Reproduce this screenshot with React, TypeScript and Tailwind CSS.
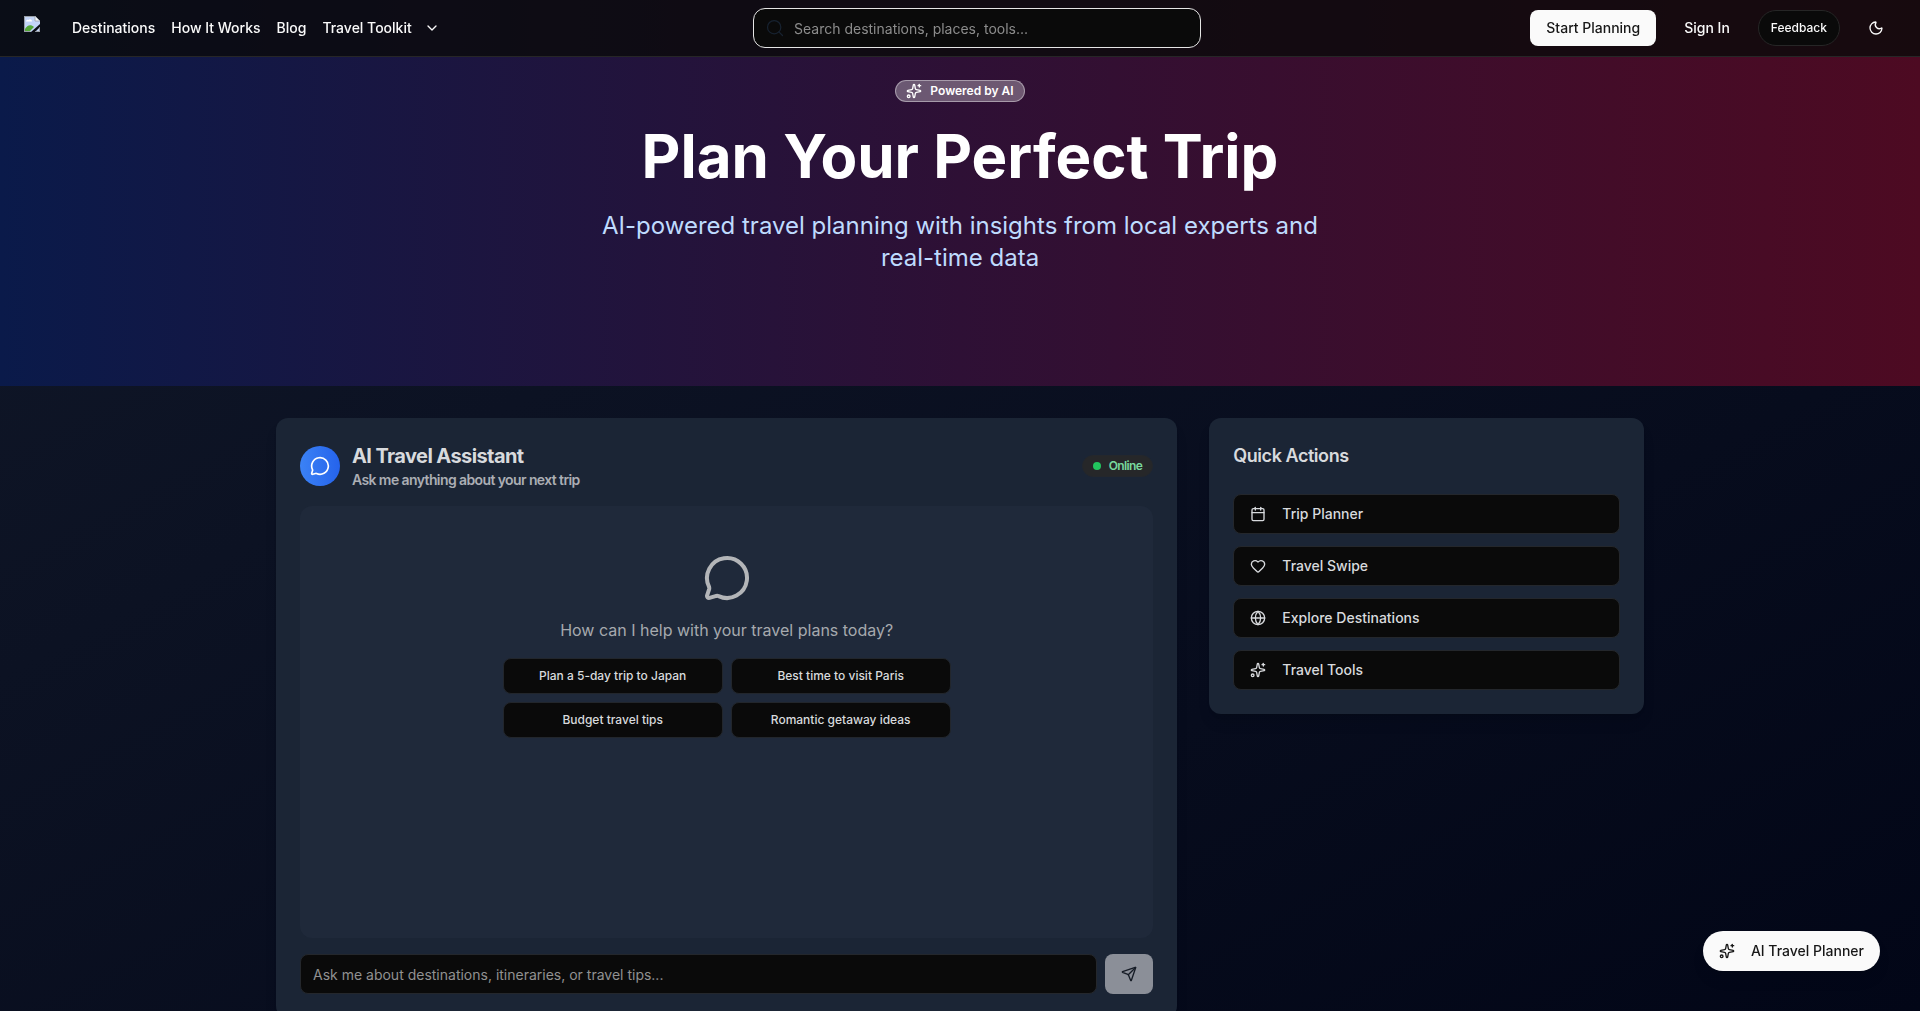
import React from 'react';
import { Calendar, ChevronDown, Globe, Heart, MessageCircle, Moon, Search, Send, Sparkles } from 'lucide-react';

const navLinks = [
  { label: 'Destinations', href: '#destinations' },
  { label: 'How It Works', href: '#how-it-works' },
  { label: 'Blog', href: '#blog' },
];

const suggestions = [
  'Plan a 5-day trip to Japan',
  'Best time to visit Paris',
  'Budget travel tips',
  'Romantic getaway ideas',
];

const quickActions = [
  { label: 'Trip Planner', icon: Calendar },
  { label: 'Travel Swipe', icon: Heart },
  { label: 'Explore Destinations', icon: Globe },
  { label: 'Travel Tools', icon: Sparkles },
];

function Logo() {
  return (
    <svg width="16" height="16" viewBox="0 0 16 16" role="img" aria-label="Home">
      <path d="M0 0h11l5 5v11H0z" fill="#c5d5f5" />
      <path d="M1 1.500h9.500v4H15V15H1z" fill="#c3d4f7" />
      <path d="M2 5.500c0-1.500 1.500-2 2.500-1.500C5.500 2.500 8 3 8 5.500z" fill="#fff" />
      <path d="M1 15v-2c2-4 6-5 9-2l-4 4z" fill="#54a738" />
      <path d="M7 16 16 8v3l-5 5z" fill="#0b0c14" />
      <path d="M0 0h11v1H1v14h6l-1 1H0zM12 15h3v-3l1-1v5h-5z" fill="#9aa0a8" />
      <path d="M11 0v5h5z" fill="#f4f6f8" stroke="#9aa0a8" strokeWidth="0.800" />
    </svg>
  );
}

function Header() {
  return (
    <header className="fixed inset-x-0 top-0 z-50 border-b border-[#262626] bg-[#0a0a0a]/80">
      <div className="flex h-14 items-center px-6">
        <a href="#home" className="mr-8 -mt-2">
          <Logo />
        </a>
        <nav className="flex items-center gap-4 text-sm font-medium text-neutral-50">
          {navLinks.map((link) => (
            <a key={link.label} href={link.href}>
              {link.label}
            </a>
          ))}
          <button type="button" className="flex items-center gap-3">
            Travel Toolkit
            <ChevronDown className="h-4 w-4" />
          </button>
        </nav>

        <div className="flex flex-1 justify-center pr-4">
          <div className="relative w-full max-w-md">
            <Search className="absolute left-3 top-2.5 h-5 w-5 text-[#172230]" strokeWidth={1.5} />
            <input
              type="search"
              aria-label="Search"
              placeholder="Search destinations, places, tools..."
              className="h-10 w-full rounded-xl border border-neutral-200 bg-[#0a0a0a] pl-10 pr-4 text-sm text-neutral-50 placeholder:text-[#8c8c8c]"
            />
          </div>
        </div>

        <div className="flex items-center gap-3 text-sm font-medium text-neutral-50">
          <button type="button" className="h-9 rounded-lg bg-neutral-50 px-4 text-neutral-900">
            Start Planning
          </button>
          <button type="button" className="h-9 px-4">
            Sign In
          </button>
          <button
            type="button"
            className="h-9 rounded-full border border-[#262626] bg-[#0a0a0a] px-3 text-xs font-medium"
          >
            Feedback
          </button>
          <button type="button" aria-label="Toggle theme" className="ml-1 flex h-9 w-10 items-center justify-center">
            <Moon className="h-4 w-4" />
          </button>
        </div>
      </div>
    </header>
  );
}

function Hero() {
  return (
    <section className="bg-linear-to-r/srgb from-[#0a1a4a] via-[#2e1035] to-[#4d0a22] py-20 text-center">
      <div className="mx-auto flex max-w-3xl flex-col items-center">
        <div className="inline-flex h-[22px] items-center gap-2 rounded-full border border-white/40 bg-white/30 px-2.5 text-xs font-semibold text-white">
          <Sparkles className="h-4 w-4" />
          Powered by AI
        </div>
        <h1 className="mt-6 text-6xl font-bold text-white">Plan Your Perfect Trip</h1>
        <p className="mb-8 mt-6 text-2xl text-[#bfdbfe]">
          AI-powered travel planning with insights from local experts and real-time data
        </p>
      </div>
    </section>
  );
}

function ChatCard() {
  return (
    <section className="rounded-xl bg-[#1b2535] p-6 shadow-lg lg:col-span-2">
      <div className="flex items-center justify-between text-2xl font-semibold tracking-tight">
        <div className="flex items-center gap-3">
          <div className="flex h-10 w-10 items-center justify-center rounded-full bg-linear-to-r/srgb from-[#3b82f6] to-[#2563eb]">
            <MessageCircle className="h-5 w-5 text-white" />
          </div>
          <div>
            <h2 className="text-xl font-bold text-[#d8dadd]">AI Travel Assistant</h2>
            <p className="text-sm text-[#abaeb4]">Ask me anything about your next trip</p>
          </div>
        </div>
        <div className="flex h-[22px] items-center gap-2 rounded-full border border-[#24272c] bg-[#262729] px-2.5 text-xs text-[#79d99d]">
          <span className="h-2 w-2 rounded-full bg-[#22c55e]" />
          Online
        </div>
      </div>

      <div className="mt-4 h-[432px] rounded-xl bg-[#1f293a] p-4">
        <div className="flex flex-col items-center py-8">
          <MessageCircle className="h-12 w-12 text-[#b3b5b8]" />
          <p className="mt-4 text-base text-[#a6a9ae]">How can I help with your travel plans today?</p>
          <div className="mt-4 grid w-full max-w-md grid-cols-2 gap-2">
            {suggestions.map((text) => (
              <button
                key={text}
                type="button"
                className="h-9 rounded-lg border border-[#22262c] bg-[#0a0a0a] px-3 text-xs font-medium text-[#d8dadd]"
              >
                {text}
              </button>
            ))}
          </div>
        </div>
      </div>

      <form className="mt-4 flex gap-2" onSubmit={(e) => e.preventDefault()}>
        <input
          type="text"
          aria-label="Message"
          placeholder="Ask me about destinations, itineraries, or travel tips..."
          className="h-10 min-w-0 flex-1 rounded-lg border border-[#24272c] bg-[#0a0a0a] px-3 text-sm text-neutral-50 placeholder:text-[#919191]"
        />
        <button
          type="submit"
          aria-label="Send"
          className="flex h-10 w-12 items-center justify-center rounded-lg bg-[#8b8f98] text-[#161c26]"
        >
          <Send className="h-4 w-4" />
        </button>
      </form>
    </section>
  );
}

function QuickActions() {
  return (
    <aside className="rounded-xl bg-[#1b2535] p-6 shadow-lg">
      <h2 className="text-lg font-semibold tracking-tight text-[#d8dadd]">Quick Actions</h2>
      <div className="mt-6 flex flex-col gap-3">
        {quickActions.map((action) => {
          const Icon = action.icon;
          return (
            <button
              key={action.label}
              type="button"
              className="flex h-10 items-center gap-4 rounded-lg border border-[#24272c] bg-[#0a0a0a] px-4 text-sm font-medium text-[#d8dadd]"
            >
              <Icon className="h-4 w-4" />
              {action.label}
            </button>
          );
        })}
      </div>
    </aside>
  );
}

export default function App() {
  return (
    <div className="h-screen overflow-hidden bg-linear-to-br/srgb from-[#111829] to-[#020617] font-['Inter',sans-serif]">
      <Header />
      <Hero />
      <main className="mx-auto grid max-w-[1400px] items-start gap-8 px-4 py-8 lg:grid-cols-3">
        <ChatCard />
        <QuickActions />
      </main>
      <button
        type="button"
        className="fixed bottom-10 right-10 flex h-10 items-center gap-4 rounded-full bg-neutral-50 px-4 text-sm font-medium text-neutral-900 shadow-lg"
      >
        <Sparkles className="h-4 w-4" />
        AI Travel Planner
      </button>
    </div>
  );
}
